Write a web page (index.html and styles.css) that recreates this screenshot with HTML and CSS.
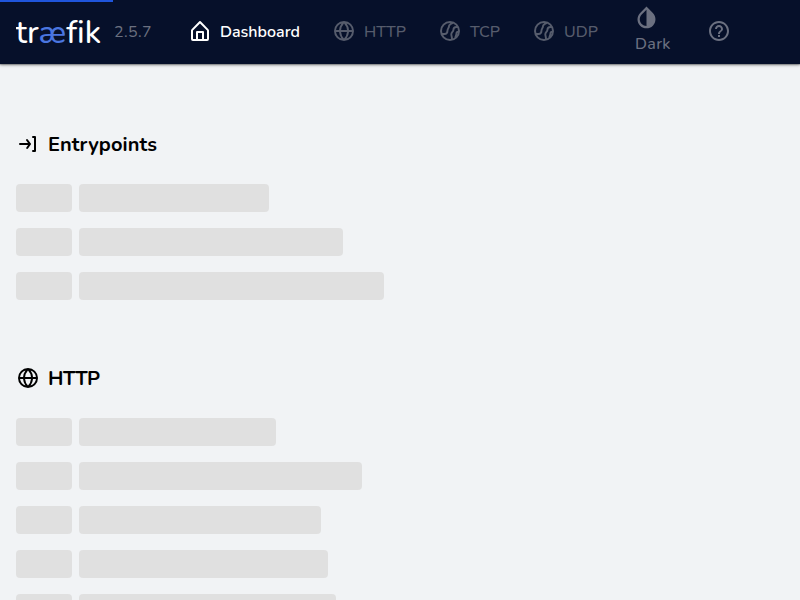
FILE: index.html
```html
<!DOCTYPE html>
<html lang="en">
<head>
<meta charset="utf-8">
<title>Traefik</title>
<link rel="stylesheet" href="styles.css">
</head>
<body>
<svg class="defs" width="0" height="0">
  <symbol id="globe" viewBox="0 0 24 24"><path d="M22 12A10 10 0 0 0 12 2a10 10 0 0 0 0 20 10 10 0 0 0 10-10zm-2.07-1H17a12.91 12.91 0 0 0-2.33-6.54A8 8 0 0 1 19.93 11zM9.08 13H15a11.44 11.44 0 0 1-3 6.61A11 11 0 0 1 9.08 13zm0-2A11.4 11.4 0 0 1 12 4.4a11.19 11.19 0 0 1 3 6.6zm.36-6.57A13.18 13.18 0 0 0 7.07 11h-3a8 8 0 0 1 5.37-6.57zM4.07 13h3a12.86 12.86 0 0 0 2.35 6.56A8 8 0 0 1 4.07 13zm10.55 6.55A13.14 13.14 0 0 0 17 13h2.95a8 8 0 0 1-5.33 6.55z"/></symbol>
  <symbol id="globe2" viewBox="0 0 24 24"><g fill="none" stroke="currentColor" stroke-width="2"><circle cx="12" cy="12" r="9"/><path stroke-width="1.900" d="M3.500 15H6.500C8.900 15 9.500 13.500 9.500 11.500C9.500 9.400 11 9 11 7.300C11 5.600 12.400 4.800 15 3.900M20 8H18.500C16.500 8 15.400 9.200 15.400 11C15.400 12.600 13.300 13.300 13.300 15.200C13.300 17 14.200 18 14 21M20.500 12.700C18.800 12.700 18.400 13.600 18.400 14.800C18.400 16.300 17.500 17 17.400 18.500"/></g></symbol>
</svg>
<div class="progress"></div>
<header class="bar">
  <svg class="logo" width="98" height="48" viewBox="0 0 98 48"><text x="-.5" y="35">tr<tspan class="ae">æ</tspan>fik</text></svg>
  <span class="version">2.5.7</span>
  <nav class="nav">
    <a class="tab active"><svg class="icon" viewBox="0 0 24 24"><path d="M20.42 10.18L12.71 2.3a1 1 0 0 0-1.42 0l-7.71 7.89A2 2 0 0 0 3 11.62V20a2 2 0 0 0 1.89 2h14.22A2 2 0 0 0 21 20v-8.38a2.070 2.070 0 0 0-.58-1.440zM10 20v-6h4v6zm9 0h-3v-7a1 1 0 0 0-1-1H9a1 1 0 0 0-1 1v7H5v-8.420l7-7.150 7 7.190z"/></svg><span class="label dashboard">Dashboard</span></a>
    <a class="tab"><svg class="icon"><use href="#globe"/></svg><span class="label http">HTTP</span></a>
    <a class="tab"><svg class="icon"><use href="#globe2"/></svg><span class="label tcp">TCP</span></a>
    <a class="tab"><svg class="icon"><use href="#globe2"/></svg><span class="label udp">UDP</span></a>
  </nav>
  <div class="theme"><svg class="drop" viewBox="0 0 24 24"><path d="M17.66 7.93L12 2.27 6.34 7.93c-3.120 3.120-3.120 8.190 0 11.310C7.900 20.800 9.950 21.580 12 21.580s4.100-.78 5.660-2.340c3.120-3.120 3.120-8.190 0-11.310zM12 19.590c-1.600 0-3.110-.62-4.240-1.760C6.620 16.690 6 15.190 6 13.590s.62-3.110 1.760-4.240L12 5.100v14.490z"/></svg><span class="dark">Dark</span></div>
  <svg class="icon help" viewBox="0 0 24 24"><path d="M11 18h2v-2h-2v2zm1-16C6.480 2 2 6.480 2 12s4.480 10 10 10 10-4.480 10-10S17.520 2 12 2zm0 18c-4.410 0-8-3.590-8-8s3.590-8 8-8 8 3.590 8 8-3.590 8-8 8zm0-14c-2.210 0-4 1.790-4 4h2c0-1.100.9-2 2-2s2 .9 2 2c0 2-3 1.750-3 5h2c0-2.250 3-2.500 3-5 0-2.210-1.790-4-4-4z"/></svg>
</header>
<main class="page">
  <section class="section">
    <h2 class="title"><svg class="icon" viewBox="0 0 24 24"><path d="M19 4h-2a1 1 0 0 0 0 2h1v12h-1a1 1 0 0 0 0 2h2a1 1 0 0 0 1-1V5a1 1 0 0 0-1-1zM11.800 7.400a1 1 0 0 0-1.600 1.200L12 11H4a1 1 0 0 0 0 2h8.090l-1.720 2.440a1 1 0 0 0 .24 1.400 1 1 0 0 0 .58.18 1 1 0 0 0 .81-.42l2.820-4a1 1 0 0 0 0-1.180z"/></svg><span class="caption entry">Entrypoints</span></h2>
    <div class="rows">
      <div class="row"><i class="skel"></i><i class="skel" style="width:190px"></i></div>
      <div class="row"><i class="skel"></i><i class="skel" style="width:264px"></i></div>
      <div class="row"><i class="skel"></i><i class="skel" style="width:305px"></i></div>
    </div>
  </section>
  <section class="section">
    <h2 class="title"><svg class="icon"><use href="#globe"/></svg><span class="caption http-title">HTTP</span></h2>
    <div class="rows">
      <div class="row"><i class="skel"></i><i class="skel" style="width:197px"></i></div>
      <div class="row"><i class="skel"></i><i class="skel" style="width:283px"></i></div>
      <div class="row"><i class="skel"></i><i class="skel" style="width:242px"></i></div>
      <div class="row"><i class="skel"></i><i class="skel" style="width:249px"></i></div>
      <div class="row"><i class="skel"></i><i class="skel" style="width:257px"></i></div>
    </div>
  </section>
</main>
</body>
</html>
```
FILE: styles.css
```css
* { box-sizing: border-box; }
body {
  margin: 0;
  height: 600px;
  overflow: hidden;
  background: #f1f3f5;
  color: #000;
  font-family: Nunito, Lato, sans-serif;
  font-size: 16px;
  line-height: 24px;
}
.defs { position: absolute; }
.progress {
  position: absolute;
  top: 0;
  left: 0;
  width: 113px;
  height: 2px;
  background: #1f55dc;
}
.bar {
  display: flex;
  align-items: center;
  height: 64px;
  padding: 0 16px;
  background: #06102a;
  color: #6b7080;
  box-shadow: 0 1px 3px rgba(0, 0, 0, .4), 0 1px 1px rgba(0, 0, 0, .2);
}
.icon { width: 24px; height: 24px; fill: currentColor; flex: none; }
.logo { flex: none; }
.logo text {
  font-family: Nunito, Lato, sans-serif;
  font-size: 32px;
  font-weight: 500;
  letter-spacing: .05px;
  font-variant-ligatures: none;
  fill: #fff;
}
.logo .ae { fill: #4a76e0; }
.version { width: 62px; letter-spacing: .4px; }
.nav { display: flex; flex: none; width: 459px; }
.tab { display: flex; align-items: center; gap: 8px; padding: 0 16px 2px 12px; color: #565c6c; }
.tab + .tab { padding-left: 15px; }
.tab.active { color: #fff; padding-right: 17px; }
.label { padding-top: 2px; font-weight: 500; }
.dashboard { width: 80px; font-weight: 600; }
.http { width: 43px; }
.tcp { width: 31px; }
.udp { width: 35px; }
.theme { display: flex; flex-direction: column; flex: none; width: 72px; height: 64px; padding-top: 4px; }
.drop { width: 27px; height: 27px; margin-left: -2px; fill: currentColor; }
.dark { padding-top: 1px; font-weight: 500; letter-spacing: .35px; }
.help { margin-bottom: 2px; }
.page { height: 536px; overflow: hidden; padding: 64px 16px 0; }
.section { margin-bottom: 62px; }
.title { display: flex; align-items: center; gap: 8px; height: 32px; margin: 0 0 24px; font-size: 20px; font-weight: 700; }
.caption { padding-top: 2px; }
.entry { letter-spacing: .1px; }
.http-title { letter-spacing: -.5px; }
.rows { display: flex; flex-direction: column; gap: 16px; }
.row { display: flex; gap: 7px; height: 28px; }
.skel { width: 56px; border-radius: 4px; background: #e0e0e0; }
```
